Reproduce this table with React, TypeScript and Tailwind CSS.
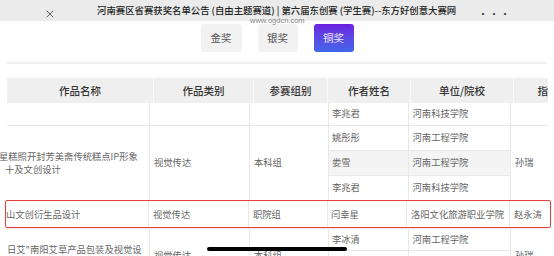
import React from "react";
import { X } from "lucide-react";

const cjk = { fontFamily: '"Noto Sans CJK SC", "Noto Sans", sans-serif' };

function Sub({ name, school, h, gray, last }: { name: string; school: string; h: string; gray?: boolean; last?: boolean }) {
  return (
    <div className={`flex ${h} ${last ? "" : "border-b border-[#e8e8e8]"} ${gray ? "bg-[#f4f4f4]" : ""}`}>
      <div className="w-[79px] pl-[3px] flex items-center">{name}</div>
      <div className="w-[103px] border-l border-[#e8e8e8] pl-[4px] flex items-center">{school}</div>
    </div>
  );
}

export default function App() {
  const heads = [
    { t: "作品名称", w: "w-[146px]" },
    { t: "作品类别", w: "w-[100px]" },
    { t: "参赛组别", w: "w-[74px]" },
    { t: "作者姓名", w: "w-[83px]" },
    { t: "单位/院校", w: "w-[103px]" },
    { t: "指导教师", w: "w-[90px]" },
  ];

  return (
    <div className="relative w-[554px] h-[256px] overflow-hidden bg-white" style={cjk}>
      {/* top bar */}
      <div className="h-[21px] bg-[#ebebeb] flex items-center">
        <X className="ml-[44px] mt-[6px] w-[12px] h-[12px] text-[#333]" strokeWidth={1.5} />
        <div className="ml-[41px] text-[9.4px] font-medium text-[#222] whitespace-nowrap -mt-[1px]">
          河南赛区省赛获奖名单公告 (自由主题赛道) | 第六届东创赛 (学生赛)--东方好创意大赛网
        </div>
        <div className="ml-auto mr-[43px] mt-[6px] text-[10px] leading-none text-[#333] tracking-[1px]">•••</div>
      </div>
      <div className="absolute left-[250px] top-[15px] text-[7.5px] text-[#8a8a8a]" style={{ fontFamily: '"Liberation Sans", sans-serif' }}>
        www.ogdcn.com
      </div>

      {/* award tabs */}
      <div className="flex justify-center gap-[16px] mt-[3px]">
        <button className="w-[41px] h-[28px] rounded-[3px] bg-[#f2f2f2] text-[10.5px] text-[#555]">金奖</button>
        <button className="w-[40px] h-[28px] rounded-[3px] bg-[#f2f2f2] text-[10.5px] text-[#555]">银奖</button>
        <button className="w-[40px] h-[28px] rounded-[3px] bg-gradient-to-b from-[#6a1fe0] to-[#3f66ea] text-[10.5px] text-[#efe8ff]">铜奖</button>
      </div>
      <div className="mx-[7px] mt-[10px] h-[2px] bg-[#f0f0f0]" />

      <div className="mt-[14px] w-[548px] pl-[7px] overflow-hidden">
        {/* table header */}
        <div className="flex w-[600px] h-[25px] bg-[#efefef] text-[10.5px] text-[#333] font-medium">
          {heads.map((h, i) => (
            <div key={h.t} className={`${h.w} shrink-0 flex items-center justify-center ${i ? "border-l border-[#fafafa]" : ""}`}>
              {h.t}
            </div>
          ))}
        </div>

        {/* table body */}
        <div className="w-[600px] text-[9.3px] text-[#666]">
          <div className="flex border-b border-[#e8e8e8]">
            <div className="w-[142px]" />
            <div className="w-[100px] border-l border-[#e8e8e8]" />
            <div className="w-[79px] border-l border-[#e8e8e8]" />
            <div className="w-[182px] border-l border-[#e8e8e8]">
              <Sub name="李兆君" school="河南科技学院" h="h-[22px]" last />
            </div>
            <div className="w-[90px] border-l border-[#e8e8e8]" />
          </div>

          <div className="flex border-b border-[#e8e8e8]">
            <div className="w-[142px] flex flex-col justify-center leading-[13px] whitespace-nowrap">
              <div className="-ml-[8px]">星糕照开封芳美斋传统糕点IP形象</div>
              <div className="-ml-[2px]">十及文创设计</div>
            </div>
            <div className="w-[100px] border-l border-[#e8e8e8] pl-[4px] flex items-center">视觉传达</div>
            <div className="w-[79px] border-l border-[#e8e8e8] pl-[4px] flex items-center">本科组</div>
            <div className="w-[182px] border-l border-[#e8e8e8]">
              <Sub name="姚彤彤" school="河南工程学院" h="h-[25px]" />
              <Sub name="娄雪" school="河南工程学院" h="h-[25px]" gray />
              <Sub name="李兆君" school="河南科技学院" h="h-[24px]" last />
            </div>
            <div className="w-[90px] border-l border-[#e8e8e8] pl-[4px] flex items-center">孙瑞</div>
          </div>

          <div className="flex h-[28px] border-b border-[#e8e8e8]">
            <div className="w-[142px] flex items-center whitespace-nowrap -ml-[1px]">山文创衍生品设计</div>
            <div className="w-[100px] border-l border-[#e8e8e8] pl-[4px] flex items-center">视觉传达</div>
            <div className="w-[79px] border-l border-[#e8e8e8] pl-[4px] flex items-center">职院组</div>
            <div className="w-[79px] border-l border-[#e8e8e8] pl-[3px] flex items-center">闫幸星</div>
            <div className="w-[103px] border-l border-[#e8e8e8] pl-[4px] flex items-center">洛阳文化旅游职业学院</div>
            <div className="w-[90px] border-l border-[#e8e8e8] pl-[4px] flex items-center">赵永涛</div>
          </div>

          <div className="flex">
            <div className="w-[142px] flex flex-col justify-center leading-[14px] whitespace-nowrap">
              <div>日艾"南阳艾草产品包装及视觉设</div>
              <div>计</div>
            </div>
            <div className="w-[100px] border-l border-[#e8e8e8] pl-[4px] flex items-center">视觉传达</div>
            <div className="w-[79px] border-l border-[#e8e8e8] pl-[4px] flex items-center">本科组</div>
            <div className="w-[182px] border-l border-[#e8e8e8]">
              <Sub name="李冰清" school="河南工程学院" h="h-[22px]" />
              <Sub name="" school="" h="h-[32px]" last />
            </div>
            <div className="w-[90px] border-l border-[#e8e8e8] pl-[4px] flex items-center">孙瑞</div>
          </div>
        </div>
      </div>

      {/* highlight box */}
      <div className="absolute left-[5px] top-[200px] w-[546px] h-[28px] border-[1.5px] border-[#e8403a] rounded-[2px]" />
      {/* home indicator */}
      <div className="absolute left-[207px] top-[247px] w-[140px] h-[4px] rounded-full bg-black" />
    </div>
  );
}
